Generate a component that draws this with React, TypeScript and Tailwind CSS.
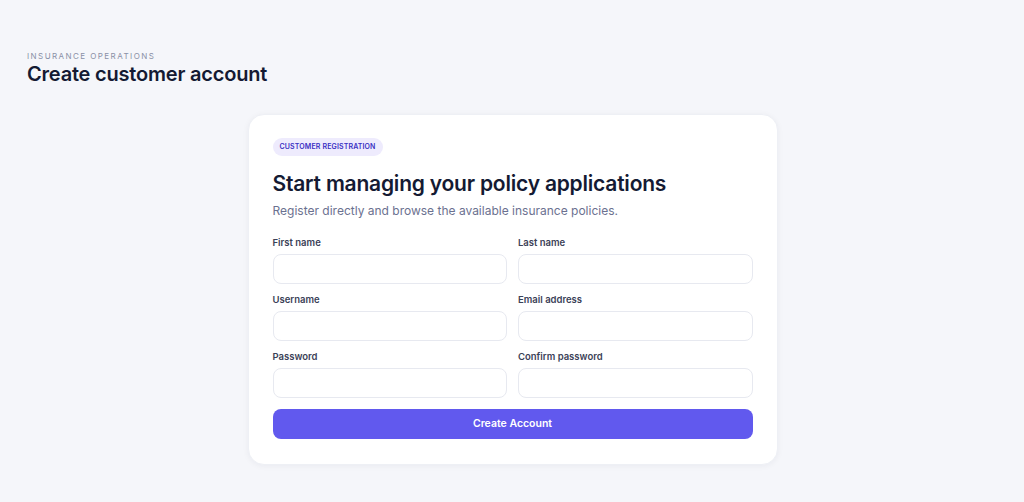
import React from "react";

const fields: [string, string][] = [
  ["First name", "Last name"],
  ["Username", "Email address"],
  ["Password", "Confirm password"],
];

export default function App() {
  return (
    <div
      className="min-h-[502px] w-full bg-[#f5f6fa] text-[#141a33]"
      style={{ fontFamily: "Inter, 'Noto Sans', sans-serif" }}
    >
      <div className="px-[27px] pt-[51px]">
        <div className="text-[8px] leading-[10px] tracking-[0.18em] text-[#8a90a6] uppercase">
          Insurance Operations
        </div>
        <h1 className="mt-0 text-[20px] leading-[26px] font-semibold tracking-[-0.01em] text-[#141a33]">
          Create customer account
        </h1>
      </div>
      <div className="mt-[27px] flex justify-center pl-[1px]">
        <div className="w-[530px] rounded-[16px] bg-white px-[24px] pt-[23px] pb-[25px] shadow-[0_1px_6px_rgba(20,26,51,0.05)] border border-[#eef0f5]">
          <div className="flex">
            <span className="flex h-[18px] items-center rounded-full bg-[#eeebfd] px-[7px] text-[7px] font-semibold tracking-[0.02em] text-[#3a30c4] uppercase">
              Customer registration
            </span>
          </div>
          <h2 className="mt-[15px] text-[21px] leading-[26px] font-semibold tracking-[-0.01em] text-[#141a33]">
            Start managing your policy applications
          </h2>
          <p className="mt-[5px] text-[12px] leading-[18px] text-[#6b7190]">
            Register directly and browse the available insurance policies.
          </p>
          <div className="mt-[17px] flex flex-col gap-[10px]">
            {fields.map((row) => (
              <div key={row[0]} className="grid grid-cols-2 gap-[11px]">
                {row.map((label) => (
                  <label key={label} className="flex flex-col gap-[5px]">
                    <span className="text-[9.5px] leading-[12px] font-semibold text-[#3b4157]">
                      {label}
                    </span>
                    <input
                      type={label.toLowerCase().includes("password") ? "password" : "text"}
                      className="h-[30px] w-full rounded-[8px] border border-[#e7e9f0] bg-white px-3 outline-none"
                    />
                  </label>
                ))}
              </div>
            ))}
          </div>
          <button className="mt-[11px] h-[30px] w-full rounded-[8px] bg-[#6159ee] text-[10.5px] font-semibold text-white">
            Create Account
          </button>
        </div>
      </div>
    </div>
  );
}
